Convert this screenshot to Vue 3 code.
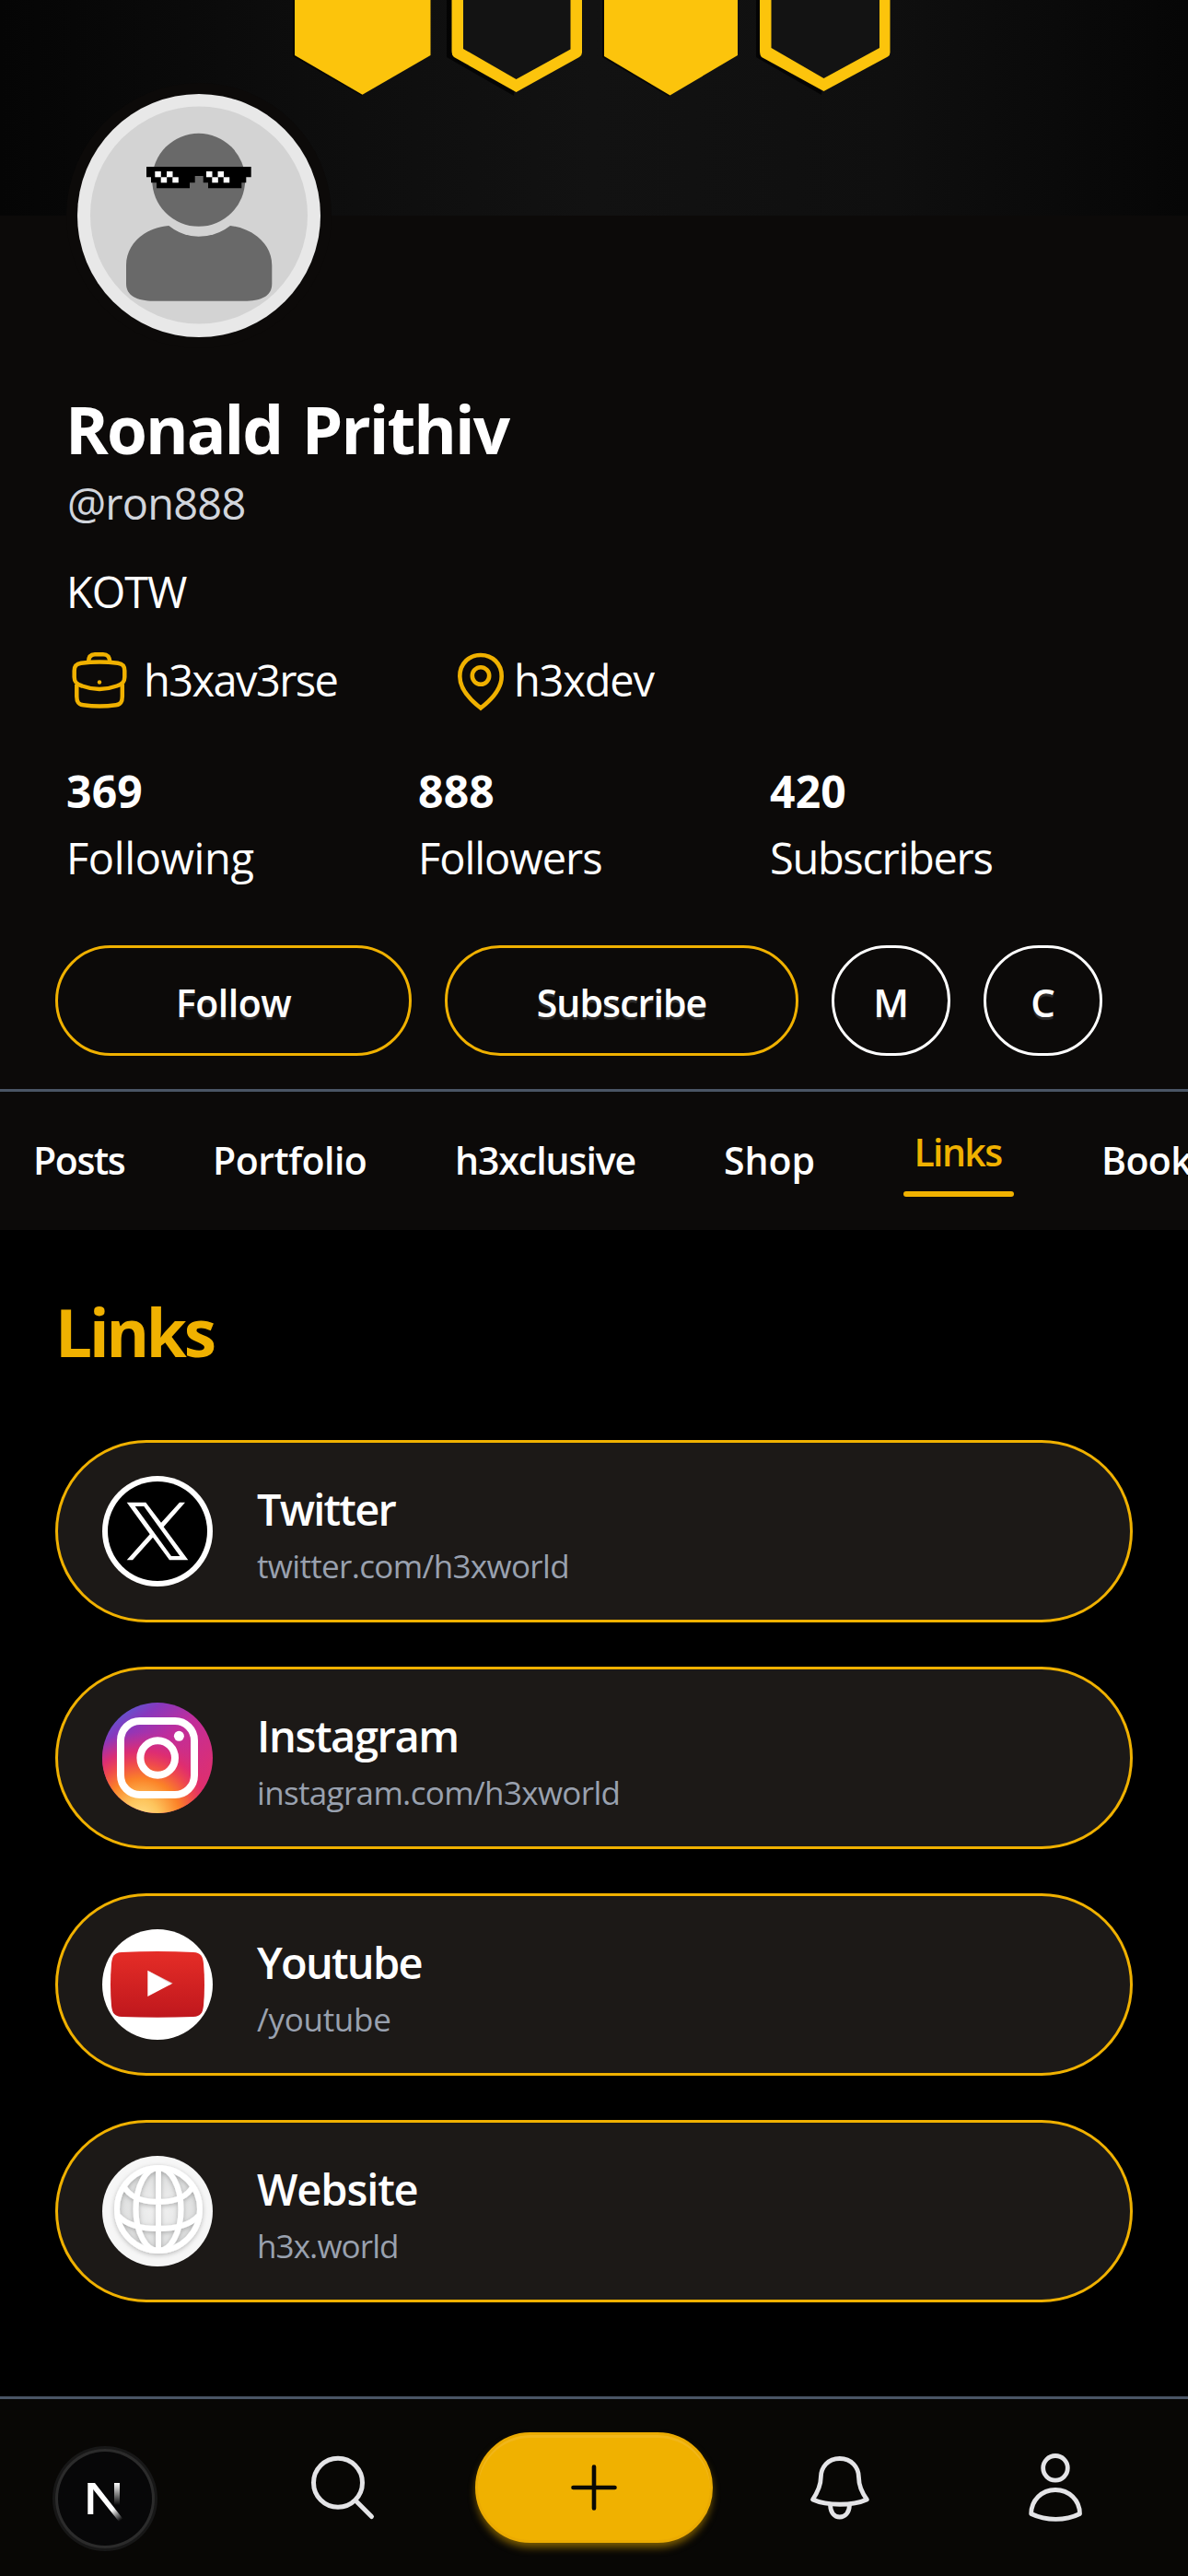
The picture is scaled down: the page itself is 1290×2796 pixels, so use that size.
<script setup>
const stats = [
  { value: '369', label: 'Following', ls: -0.4 },
  { value: '888', label: 'Followers', ls: -1.05 },
  { value: '420', label: 'Subscribers', ls: -1.33 },
]
const tabs = [
  { name: 'Posts', width: 99, ls: -1.4 },
  { name: 'Portfolio', width: 167, ls: -0.5 },
  { name: 'h3xclusive', width: 196, ls: -1.07 },
  { name: 'Shop', width: 99, ls: 0 },
  { name: 'Links', width: 120, ls: -1.6, active: true },
  { name: 'Book', width: 110, ls: -0.6 },
]
const links = [
  { id: 'twitter', title: 'Twitter', url: 'twitter.com/h3xworld', tls: -1.8, uls: -0.66 },
  { id: 'instagram', title: 'Instagram', url: 'instagram.com/h3xworld', tls: -1.4, uls: -0.66 },
  { id: 'youtube', title: 'Youtube', url: '/youtube', tls: -1.77, uls: -0.3 },
  { id: 'website', title: 'Website', url: 'h3x.world', tls: -1.12, uls: -0.9 },
]
</script>

<template>
  <div class="app">
    <header class="banner">
      <svg width="1290" height="234" viewBox="0 0 1290 234">
        <defs>
          <linearGradient id="bannerBg" x1="0" y1="0" x2="1" y2="0">
            <stop offset="0" stop-color="#050505" />
            <stop offset="0.25" stop-color="#0d0d0d" />
            <stop offset="0.5" stop-color="#121212" />
            <stop offset="0.75" stop-color="#0f0f0f" />
            <stop offset="1" stop-color="#060606" />
          </linearGradient>
        </defs>
        <rect width="1290" height="234" fill="url(#bannerBg)" />
        <g fill="#000" opacity="0.75">
          <path d="M318 0V61L393 104L397 0Z" />
          <path d="M485 0V62L558 104L562 0Z" />
          <path d="M654 0V62L727 105L730 0Z" />
          <path d="M821 0V62L892 103L897 0Z" />
        </g>
        <g fill="#fcc40c">
          <path d="M320 0H467.500V60L393.500 102.700L320 60Z" />
          <path d="M490.500 0H632V57Q632 60 629 62L560.500 100L493 62Q490.500 60 490.500 55Z" />
          <path d="M656 0H801V60L727.500 103.500L656 61Z" />
          <path d="M825 0H966.500V57Q966.500 60 964 61.500L894.500 99L827 62Q825 60 825 55Z" />
        </g>
        <g fill="#131313">
          <path d="M503 0H619.500V53.500L560.500 86L503 53Z" />
          <path d="M837.500 0H955V52L894.500 85L837.500 52Z" />
        </g>
      </svg>
    </header>

    <section class="profile">
      <div class="avatar">
        <svg width="288" height="288" viewBox="0 0 288 288">
          <circle cx="144" cy="144" r="144" fill="#0c0a09" />
          <circle cx="144" cy="144" r="132" fill="#e8e8e8" />
          <circle cx="144" cy="143.500" r="118" fill="#d3d3d3" />
          <g fill="#696969">
            <circle cx="143.700" cy="105.300" r="50.500" />
            <path d="M111.300 155Q126 166.700 143.700 166.700Q163 166.700 178 155C202 158 223.300 174 223.300 198V218C223.300 232 211 236.700 193 236.700H94.700C77 236.700 65 231 65 218V198C65 174 86 157 111.300 155Z" />
          </g>
          <path d="M87 91H200.700V102.300H195.300V108.300H190.300V114.300H154V108.300H148.700V101H139.700V108.300H134V114.300H98V108.300H92V102.300H87Z" fill="#000" />
          <g fill="#fff">
            <rect x="96.300" y="96" width="6.500" height="6.300" />
            <rect x="109" y="96" width="6.500" height="6.300" />
            <rect x="102.700" y="102.300" width="6.500" height="6" />
            <rect x="115.300" y="102.300" width="6.500" height="6" />
            <rect x="152" y="96" width="6.500" height="6.300" />
            <rect x="164.500" y="96" width="6.500" height="6.300" />
            <rect x="158.300" y="102.300" width="6.500" height="6" />
            <rect x="170.700" y="102.300" width="6.500" height="6" />
          </g>
        </svg>
      </div>

      <h1 class="name">Ronald Prithiv</h1>
      <p class="handle">@ron888</p>
      <p class="bio">KOTW</p>

      <div class="info">
        <div class="info-item work">
          <svg width="72" height="72" viewBox="0 0 72 72" fill="none" stroke="#f0b100" stroke-width="4.500">
            <path d="M24 17C24 10 27 8.200 31 8.200H40C45 8.200 47 11 47.500 17" />
            <path d="M8.700 26C8.700 20.500 11 18.600 16 17.800Q36 15.200 56 17.800C61.500 18.600 63.300 21 63.300 26V33C63.300 38.500 60.500 40.500 55 42.500Q36 49.500 17 42.500C11 40.500 8.700 38 8.700 33Z" />
            <path d="M11.300 41V54C11.300 60.500 13.500 62.700 18.500 63.300Q36 65.700 54 63.300C59 62.700 60.800 60 60.800 54V41" />
            <circle cx="36" cy="38.500" r="2.200" fill="#f0b100" stroke="none" />
          </svg>
          <span>h3xav3rse</span>
        </div>
        <div class="info-item place">
          <svg width="72" height="72" viewBox="0 0 72 72" fill="none" stroke="#f0b100" stroke-width="4.600">
            <path d="M36 66.500C21 55 13.300 44 13.300 32C13.300 18 23.500 9 36 9S58.700 18 58.700 32C58.700 44 51 55 36 66.500Z" />
            <circle cx="36" cy="31.500" r="9.200" />
          </svg>
          <span>h3xdev</span>
        </div>
      </div>

      <div class="stats">
        <div v-for="s in stats" :key="s.label">
          <strong>{{ s.value }}</strong>
          <span :style="{ letterSpacing: s.ls + 'px' }">{{ s.label }}</span>
        </div>
      </div>

      <div class="actions">
        <button class="follow">Follow</button>
        <button class="subscribe">Subscribe</button>
        <button class="round">M</button>
        <button class="round">C</button>
      </div>
    </section>

    <nav class="tabs">
      <div v-for="t in tabs" :key="t.name" class="tab" :class="{ active: t.active }" :style="{ width: t.width + 'px', letterSpacing: t.ls + 'px' }">
        <span>{{ t.name }}</span>
        <i v-if="t.active"></i>
      </div>
    </nav>

    <main class="links">
      <h2>Links</h2>
      <a v-for="l in links" :key="l.id" class="card">
        <svg v-if="l.id === 'twitter'" width="120" height="120" viewBox="0 0 120 120">
          <circle cx="60" cy="60" r="60" fill="#fff" />
          <circle cx="60" cy="60" r="54" fill="#000" />
          <path fill="#fff" fill-rule="evenodd" d="M26.700 28.700H47.300L64 50.700L84 28.700H90L66.700 55.300L93.300 91.300H73L55 66.700L33 91.300H26.700L51.700 63.300ZM35.700 33L75 87H84.300L45.300 33Z" />
        </svg>
        <svg v-else-if="l.id === 'instagram'" width="120" height="120" viewBox="0 0 120 120">
          <defs>
            <linearGradient id="igBase" x1="0.2" y1="0" x2="0.75" y2="0.8">
              <stop offset="0" stop-color="#5360d6" />
              <stop offset="0.2" stop-color="#8738bd" />
              <stop offset="0.48" stop-color="#c02d9c" />
              <stop offset="1" stop-color="#de2f70" />
            </linearGradient>
            <radialGradient id="igWarm" gradientUnits="userSpaceOnUse" cx="42" cy="126" r="94">
              <stop offset="0" stop-color="#ffe08a" />
              <stop offset="0.22" stop-color="#fdc45c" />
              <stop offset="0.46" stop-color="#fb8228" />
              <stop offset="0.64" stop-color="#ef4a4c" />
              <stop offset="0.78" stop-color="#e22d6b" stop-opacity="0.85" />
              <stop offset="1" stop-color="#cc2f86" stop-opacity="0" />
            </radialGradient>
          </defs>
          <circle cx="60" cy="60" r="60" fill="url(#igBase)" />
          <circle cx="60" cy="60" r="60" fill="url(#igWarm)" />
          <g fill="none" stroke="#fff" stroke-width="8">
            <rect x="20" y="20" width="80" height="80" rx="21" />
            <circle cx="60.200" cy="60" r="18.800" />
          </g>
          <circle cx="83.400" cy="36.300" r="5.500" fill="#fff" />
        </svg>
        <svg v-else-if="l.id === 'youtube'" width="120" height="120" viewBox="0 0 120 120">
          <defs>
            <linearGradient id="ytRed" x1="0" y1="0" x2="0" y2="1">
              <stop offset="0" stop-color="#e52d27" />
              <stop offset="1" stop-color="#bf171d" />
            </linearGradient>
          </defs>
          <circle cx="60" cy="60" r="60" fill="#fff" />
          <path fill="url(#ytRed)" d="M21 25Q60 23 99 25C107 25.500 109 29 110 37Q112 60 110 83C109 91 107 94.500 99 95Q60 96.500 21 95C13 94.500 11 91 10 83Q8 60 10 37C11 29 13 25.500 21 25Z" />
          <path fill="#e3cfcf" d="M49.300 44.700L76.600 58.700L73 60.500Z" />
          <path fill="#fff" d="M49.300 44.700L75 59.500L49.300 73Z" />
        </svg>
        <svg v-else width="120" height="120" viewBox="0 0 120 120">
          <defs>
            <radialGradient id="globeFill">
              <stop offset="0" stop-color="#f3f3f3" />
              <stop offset="1" stop-color="#dcdddd" />
            </radialGradient>
            <filter id="globeShadow" x="-20%" y="-20%" width="140%" height="140%">
              <feDropShadow dx="0" dy="1.500" stdDeviation="2.500" flood-color="#000" flood-opacity="0.26" />
            </filter>
          </defs>
          <circle cx="60" cy="60" r="60" fill="#f6f6f6" />
          <circle cx="61" cy="58" r="45" fill="url(#globeFill)" />
          <g fill="none" stroke="#fff" stroke-width="6" filter="url(#globeShadow)">
            <circle cx="61" cy="58" r="45" />
            <ellipse cx="61" cy="58" rx="24.500" ry="45" />
            <path d="M61 13V103M23 32Q32 50 61 50T99 32M17.500 65Q30 79 61 79T104.500 65" />
          </g>
        </svg>
        <div class="card-text">
          <strong :style="{ letterSpacing: l.tls + 'px' }">{{ l.title }}</strong>
          <span :style="{ letterSpacing: l.uls + 'px' }">{{ l.url }}</span>
        </div>
      </a>
    </main>

    <footer class="bottom">
      <svg class="search" width="72" height="72" viewBox="0 0 72 72" fill="none" stroke="#e4e4e7" stroke-width="5" stroke-linecap="round">
        <circle cx="31" cy="30.700" r="26.500" />
        <path d="M50.500 50.500L67.500 67.500" />
      </svg>
      <button class="add">
        <svg width="72" height="72" viewBox="0 0 72 72" stroke="#0a0a05" stroke-width="4.600" stroke-linecap="round">
          <path d="M36 13.500V58.500M13.500 36H58.500" />
        </svg>
      </button>
      <svg class="bell" width="72" height="72" viewBox="0 0 72 72" fill="none" stroke="#e4e4e7" stroke-width="4.800" stroke-linejoin="round">
        <path d="M35.800 4.500C23 4.500 15.300 14 15.300 25C15.300 35 10.500 43 6.500 49C22 56 50 56 65.300 49C61 43 56.500 35 56.500 25C56.500 14 48.500 4.500 35.800 4.500Z" />
        <path d="M25.500 55C26 63.500 30 68 35.800 68S46 63.500 46.500 55" />
      </svg>
      <svg class="user" width="72" height="76" viewBox="0 -2 72 76" fill="none" stroke="#e4e4e7" stroke-width="4.800" stroke-linejoin="round">
        <circle cx="36" cy="14.800" r="13.300" />
        <path d="M9.700 64.500C9.700 50 21 38.500 36 38.500S62.500 50 62.500 64.500C47 72.300 26 72.300 9.700 64.500Z" />
      </svg>
      <div class="dev-badge">
        <svg width="114" height="114" viewBox="0 0 114 114">
          <defs>
            <linearGradient id="diagFade" gradientUnits="userSpaceOnUse" x1="65" y1="69" x2="73.500" y2="81">
              <stop offset="0" stop-color="#fff" />
              <stop offset="1" stop-color="#fff" stop-opacity="0" />
            </linearGradient>
            <linearGradient id="barFade" gradientUnits="userSpaceOnUse" x1="0" y1="40" x2="0" y2="64">
              <stop offset="0" stop-color="#fff" />
              <stop offset="1" stop-color="#fff" stop-opacity="0" />
            </linearGradient>
          </defs>
          <circle cx="57" cy="57" r="57" fill="#171717" />
          <circle cx="57" cy="57" r="54" fill="#2b2b2b" />
          <circle cx="57" cy="57" r="51" fill="#070708" />
          <path d="M38.300 40H44.300V74H38.300Z" fill="#fff" />
          <path d="M38.300 40H46L76.500 79L72.500 82.500L43 45.500Z" fill="url(#diagFade)" />
          <path d="M67 40H73V64H67Z" fill="url(#barFade)" />
        </svg>
      </div>
    </footer>
  </div>
</template>

<style>
body {
  background: #000;
}
</style>

<style scoped>
.app {
  position: relative;
  width: 1290px;
  height: 2796px;
  overflow: hidden;
  display: flex;
  flex-direction: column;
  background: #000;
  color: #fff;
  font-family: "Open Sans", "Noto Sans", sans-serif;
}
h1, h2, p {
  margin: 0;
}
svg {
  display: block;
  flex: none;
}
.banner {
  height: 234px;
}
.profile {
  height: 948px;
  background: #0c0a09;
}
.avatar {
  position: relative;
  width: 288px;
  margin: -144px 0 42px 72px;
}
.name {
  margin-left: 71px;
  font-size: 71px;
  font-weight: 700;
  line-height: 91px;
  letter-spacing: -1.95px;
  word-spacing: 5px;
}
.handle {
  margin-left: 73px;
  color: #d1d5dc;
  font-size: 47px;
  line-height: 70px;
  letter-spacing: -0.8px;
}
.bio {
  margin: 25px 0 0 72px;
  font-size: 47px;
  line-height: 72px;
  letter-spacing: -1.1px;
}
.info {
  display: flex;
  margin: 24px 0 0 72px;
  font-size: 47px;
  line-height: 72px;
}
.info-item {
  display: flex;
}
.work {
  width: 414px;
  gap: 12px;
  letter-spacing: -1.6px;
}
.place {
  letter-spacing: -1.2px;
}
.stats {
  display: grid;
  grid-template-columns: repeat(3, 382px);
  margin: 48px 0 0 72px;
}
.stats div {
  display: flex;
  flex-direction: column;
}
.stats strong {
  font-size: 48px;
  line-height: 73px;
  letter-spacing: 0.2px;
}
.stats span {
  font-size: 47px;
  line-height: 72px;
}
.actions {
  display: flex;
  gap: 36px;
  margin: 59px 0 0 60px;
}
.actions button {
  box-sizing: border-box;
  height: 120px;
  padding: 3px 0 0;
  border: 3px solid #f0b100;
  border-radius: 60px;
  background: none;
  color: #fff;
  font-family: inherit;
  font-size: 41px;
  font-weight: 600;
  text-shadow: 0 3px 1px rgba(255, 255, 255, 0.14);
}
.actions .follow {
  width: 387px;
  letter-spacing: -0.5px;
}
.actions .subscribe {
  width: 384px;
  letter-spacing: -0.9px;
}
.actions .round {
  width: 129px;
  border-color: #fff;
  font-size: 42px;
}
.tabs {
  box-sizing: border-box;
  display: flex;
  align-items: center;
  gap: 96px;
  height: 153px;
  padding: 0 0 2px 36px;
  border-top: 3px solid #4a5565;
  background: #0c0a09;
  font-size: 41px;
  font-weight: 600;
  line-height: 60px;
}
.tab {
  flex: none;
}
.tab:last-child {
  margin-left: -1px;
}
.tab.active {
  display: flex;
  flex-direction: column;
  align-items: center;
  gap: 13px;
  color: #f0b100;
}
.tab.active span {
  margin-right: 2px;
}
.tab i {
  width: 120px;
  height: 6px;
  border-radius: 3px;
  background: #f0b100;
}
.links {
  display: flex;
  flex: 1;
  flex-direction: column;
  gap: 48px;
  padding: 63px 60px 0;
}
.links h2 {
  margin: 0 0 21px;
  color: #f0b100;
  font-size: 71px;
  font-weight: 700;
  line-height: 96px;
  letter-spacing: -3.2px;
}
.card {
  box-sizing: border-box;
  display: flex;
  align-items: center;
  gap: 48px;
  height: 198px;
  padding-left: 48px;
  border: 3px solid #f0b100;
  border-radius: 99px;
  background: #1c1917;
}
.card-text {
  display: flex;
  flex-direction: column;
  padding-top: 3px;
}
.card-text strong {
  font-size: 47px;
  font-weight: 600;
  line-height: 72px;
}
.card-text span {
  color: #99a1af;
  font-size: 35px;
  line-height: 51px;
}
.bottom {
  position: relative;
  box-sizing: border-box;
  display: flex;
  align-items: center;
  height: 195px;
  padding-left: 336px;
  border-top: 3px solid #4a5565;
  background: #080705;
}
.add {
  display: flex;
  align-items: center;
  justify-content: center;
  width: 258px;
  height: 120px;
  margin: 0 102px 0 108px;
  padding: 0;
  border: 3px solid #ebab02;
  box-sizing: border-box;
  border-radius: 60px;
  background: #f0b100;
  box-shadow: inset 0 3px 0 #f1b61a, 0 6px 9px -1px rgba(240, 177, 0, 0.5);
}
.user {
  margin-left: 162px;
}
.dev-badge {
  position: absolute;
  left: 57px;
  top: 51px;
}
</style>
